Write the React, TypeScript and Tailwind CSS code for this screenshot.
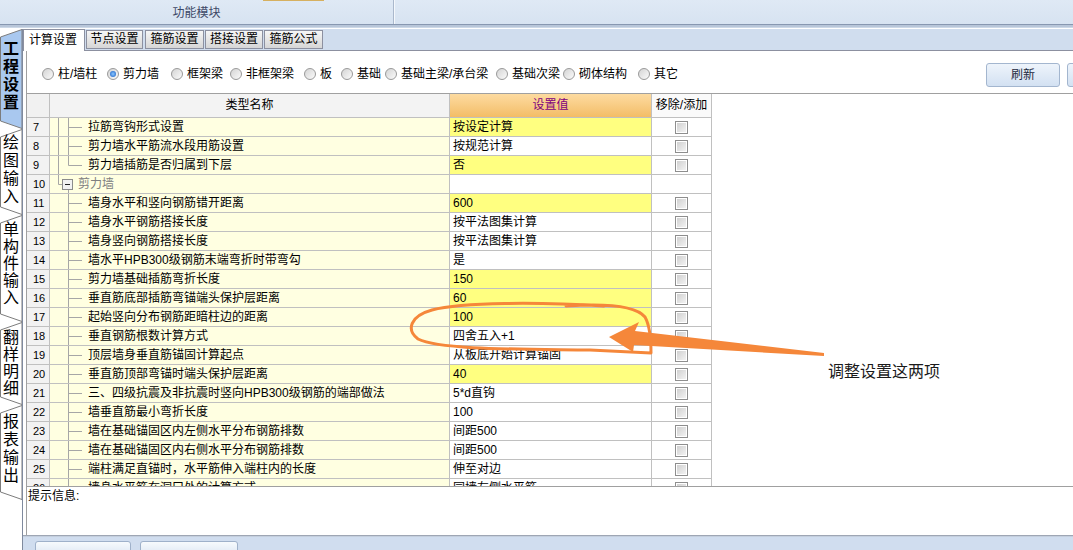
import React from 'react'

type Kind = 'mid2' | 'last2' | 'group' | 'child'

interface Row {
  n: number
  name: string
  value: string
  yellow?: boolean
  kind: Kind
}

const rows: Row[] = [
  { n: 7, name: '拉筋弯钩形式设置', value: '按设定计算', yellow: true, kind: 'mid2' },
  { n: 8, name: '剪力墙水平筋流水段用筋设置', value: '按规范计算', kind: 'mid2' },
  { n: 9, name: '剪力墙插筋是否归属到下层', value: '否', yellow: true, kind: 'last2' },
  { n: 10, name: '剪力墙', value: '', kind: 'group' },
  { n: 11, name: '墙身水平和竖向钢筋错开距离', value: '600', yellow: true, kind: 'child' },
  { n: 12, name: '墙身水平钢筋搭接长度', value: '按平法图集计算', kind: 'child' },
  { n: 13, name: '墙身竖向钢筋搭接长度', value: '按平法图集计算', kind: 'child' },
  { n: 14, name: '墙水平HPB300级钢筋末端弯折时带弯勾', value: '是', kind: 'child' },
  { n: 15, name: '剪力墙基础插筋弯折长度', value: '150', yellow: true, kind: 'child' },
  { n: 16, name: '垂直筋底部插筋弯锚端头保护层距离', value: '60', yellow: true, kind: 'child' },
  { n: 17, name: '起始竖向分布钢筋距暗柱边的距离', value: '100', yellow: true, kind: 'child' },
  { n: 18, name: '垂直钢筋根数计算方式', value: '四舍五入+1', kind: 'child' },
  { n: 19, name: '顶层墙身垂直筋锚固计算起点', value: '从板底开始计算锚固', kind: 'child' },
  { n: 20, name: '垂直筋顶部弯锚时端头保护层距离', value: '40', yellow: true, kind: 'child' },
  { n: 21, name: '三、四级抗震及非抗震时竖向HPB300级钢筋的端部做法', value: '5*d直钩', kind: 'child' },
  { n: 22, name: '墙垂直筋最小弯折长度', value: '100', kind: 'child' },
  { n: 23, name: '墙在基础锚固区内左侧水平分布钢筋排数', value: '间距500', kind: 'child' },
  { n: 24, name: '墙在基础锚固区内右侧水平分布钢筋排数', value: '间距500', kind: 'child' },
  { n: 25, name: '端柱满足直锚时，水平筋伸入端柱内的长度', value: '伸至对边', kind: 'child' },
  { n: 26, name: '墙身水平筋在洞口处的计算方式', value: '同墙左侧水平筋', kind: 'child' },
]

const radios = [
  { label: '柱/墙柱', w: 'w-[65px]' },
  { label: '剪力墙', w: 'w-[64px]', on: true },
  { label: '框架梁', w: 'w-[59px]' },
  { label: '非框架梁', w: 'w-[74px]' },
  { label: '板', w: 'w-[37px]' },
  { label: '基础', w: 'w-[44px]' },
  { label: '基础主梁/承台梁', w: 'w-[111px]' },
  { label: '基础次梁', w: 'w-[67px]' },
  { label: '砌体结构', w: 'w-[75px]' },
  { label: '其它', w: 'w-[40px]' },
]

function Tree({ kind }: { kind: Kind }) {
  const s = '#a6a6a6'
  if (kind === 'group') {
    return (
      <svg width="28" height="18" className="shrink-0">
        <line x1="8.5" y1="0" x2="8.5" y2="9.5" stroke={s} />
        <line x1="8.5" y1="9.5" x2="12" y2="9.5" stroke={s} />
        <line x1="18.5" y1="15" x2="18.5" y2="18" stroke={s} />
        <rect x="12.5" y="4.5" width="10" height="10" fill="#f2f2f2" stroke="#8c8c8c" />
        <line x1="15" y1="9.5" x2="20" y2="9.5" stroke="#222" />
      </svg>
    )
  }
  return (
    <svg width="38" height="18" className="shrink-0">
      {kind !== 'child' && <line x1="8.5" y1="0" x2="8.5" y2="18" stroke={s} />}
      <line x1="18.5" y1="0" x2="18.5" y2={kind === 'last2' ? 9.5 : 18} stroke={s} />
      <line x1="18.5" y1="9.5" x2="32" y2="9.5" stroke={s} />
    </svg>
  )
}

function Check() {
  return (
    <span className="block w-[13px] h-[13px] border border-[#8e8e8e] shadow-[inset_0_0_0_1px_#ffffff] bg-linear-to-br from-[#cdcdcd] to-[#f6f6f6]" />
  )
}

function SideTab({ label, h, box, active }: { label: string; h: number; box: string; active?: boolean }) {
  return (
    <div className={`relative shrink-0 w-[22px] ${box}`}>
      <svg className="absolute left-0 top-0" width="22" height={h}>
        <polygon
          points={`22,0.5 0.5,8 0.5,${h - 8} 22,${h - 0.5}`}
          fill={active ? '#a9c8ef' : '#ffffff'}
          stroke="#7c7c7c"
        />
      </svg>
      <div className={`relative flex flex-col items-center text-[16px] leading-[18px] ${active ? 'font-bold' : ''}`}>
        {label.split('').map((c, i) => (
          <span key={i}>{c}</span>
        ))}
      </div>
    </div>
  )
}

export default function App() {
  return (
    <div className="relative w-[1073px] h-[550px] overflow-hidden bg-white text-black font-['Liberation_Sans','Noto_Sans_CJK_SC',sans-serif]">
      {/* 顶部功能区 */}
      <div className="flex flex-col h-[29px]">
        <div className="flex h-[25px] bg-linear-to-b from-[#dfe9f5] to-[#d7e3f1] border-b border-[#8797b0]">
          <div className="w-[394px] flex flex-col border-r border-[#aab8cc]">
            <div className="ml-[263px] w-[61px] h-[1px] bg-[#d6b060]" />
            <div className="flex-1 flex items-center justify-center text-[12px] text-[#3c4866]">功能模块</div>
          </div>
          <div className="flex-1 border-l border-[#f4f8fc]" />
        </div>
        <div className="h-[2px] bg-[#b8c6d9]" />
        <div className="h-[1px] bg-[#ccd8e7]" />
        <div className="h-[1px] bg-white" />
      </div>

      <div className="flex h-[521px]">
        {/* 左侧竖向页签 */}
        <div className="w-[23px] shrink-0 flex flex-col border-r border-[#7f8a9e] bg-white">
          <SideTab label="工程设置" h={100} box="h-[100px] pt-[11px]" active />
          <SideTab label="绘图输入" h={86} box="h-[86px] pt-[5px]" />
          <SideTab label="单构件输入" h={107} box="h-[107px] pt-[6px] [&>div]:leading-[17px]" />
          <SideTab label="翻样明细" h={83} box="h-[83px] pt-[7px] [&>div]:leading-[17px]" />
          <SideTab label="报表输出" h={95} box="h-[95px] pt-[8px]" />
        </div>

        {/* 主区域 */}
        <div className="flex-1 flex flex-col min-w-0">
          {/* 页签条 */}
          <div className="h-[22px] flex items-end bg-[#d0ddee] border-b border-[#8c90a0] text-[12px]">
            <div className="w-[62px] h-[22px] -mb-[1px] bg-white border-l border-t border-r border-[#8c90a0] pl-[5px] leading-[20px]">
              计算设置
            </div>
            {[
              ['节点设置', 'ml-[1px] w-[57px]'],
              ['箍筋设置', 'ml-[2px] w-[59px]'],
              ['搭接设置', 'ml-[1px] w-[58px]'],
              ['箍筋公式', 'ml-[1px] w-[59px]'],
            ].map(([t, c]) => (
              <div
                key={t}
                className={`${c} h-[19px] mb-[1px] border border-[#8c90a0] bg-linear-to-b from-[#f6f6f6] to-[#d6d6d6] text-center leading-[17px]`}
              >
                {t}
              </div>
            ))}
          </div>

          <div className="pl-[3px] flex flex-col">
            <div className="border-l border-[#a0a0a0] flex flex-col">
              {/* 构件类型 */}
              <div className="h-[42px] flex items-start overflow-hidden text-[12px]">
                <div className="flex pl-[15px] mt-[15px] shrink-0">
                  {radios.map(r => (
                    <div key={r.label} className={`${r.w} shrink-0 flex items-center h-[16px]`}>
                      <span className="w-[12px] h-[12px] mr-[4px] rounded-full border border-[#999] bg-linear-to-br from-[#d4d4d4] to-[#fbfbfb] flex items-center justify-center">
                        {r.on && <span className="w-[6px] h-[6px] rounded-full bg-radial from-[#8cc8ff] to-[#0d58c2]" />}
                      </span>
                      <span className="leading-[16px] whitespace-nowrap">{r.label}</span>
                    </div>
                  ))}
                </div>
                <button className="ml-[308px] mt-[12px] shrink-0 w-[74px] h-[24px] rounded-[3px] border border-[#a3b6cf] bg-linear-to-b from-[#eef4fb] to-[#d3e1f2] text-[12px] text-[#1e2a40]">
                  刷新
                </button>
                <button className="ml-[7px] mt-[12px] shrink-0 w-[74px] h-[24px] rounded-[3px] border border-[#a3b6cf] bg-linear-to-b from-[#eef4fb] to-[#d3e1f2]" />
              </div>

              {/* 设置表格 */}
              <div className="h-[394px] border-t border-b border-[#a0a0a0] overflow-hidden">
                <div className="flex w-[685px] h-[24px] border-b border-[#c0c0c0] text-[12px] leading-[23px]">
                  <div className="w-[23px] border-r border-[#c0c0c0] bg-[#f1f1f1]" />
                  <div className="w-[400px] border-r border-[#c0c0c0] bg-[#f3f3f3] text-center">类型名称</div>
                  <div className="w-[202px] border-r border-[#c0c0c0] bg-linear-to-b from-[#fddba0] to-[#f3bd66] text-center text-[#80007f]">
                    设置值
                  </div>
                  <div className="w-[60px] border-r border-[#c0c0c0] bg-[#fafafa] text-center whitespace-nowrap">移除/添加</div>
                </div>
                {rows.map(r => (
                  <div key={r.n} className="flex w-[685px] h-[19px] border-b border-[#c0c0c0] text-[12px] leading-[18px]">
                    <div className="w-[23px] border-r border-[#c0c0c0] bg-[#f2f2f2] pl-[6px] text-[11px]">{r.n}</div>
                    <div className="w-[400px] border-r border-[#c0c0c0] bg-[#ffffe1] flex items-center whitespace-nowrap overflow-hidden">
                      <Tree kind={r.kind} />
                      <span className={r.kind === 'group' ? 'text-[#808080]' : ''}>{r.name}</span>
                    </div>
                    <div className={`w-[202px] border-r border-[#c0c0c0] pl-[3px] whitespace-nowrap ${r.yellow ? 'bg-[#ffff80]' : 'bg-white'}`}>
                      {r.value}
                    </div>
                    <div className="w-[60px] border-r border-[#c0c0c0] flex items-center justify-center">
                      {r.kind !== 'group' && <Check />}
                    </div>
                  </div>
                ))}
              </div>

              {/* 提示信息 */}
              <div className="h-[48px] pl-[1px] pt-[2px] text-[12px] leading-[14px]">提示信息:</div>
            </div>
          </div>
          <div className="h-[1px] bg-[#9ea6b4]" />
          <div className="h-[1px] bg-[#c4cfde]" />
          <div className="h-[13px] bg-[#d0ddef] flex items-start overflow-hidden">
            <div className="ml-[12px] mt-[4px] w-[96px] h-[14px] rounded-t-[3px] border border-[#9fb1ca] bg-linear-to-b from-[#f7fafd] to-[#dfe8f4]" />
            <div className="ml-[9px] mt-[4px] w-[98px] h-[14px] rounded-t-[3px] border border-[#9fb1ca] bg-linear-to-b from-[#f7fafd] to-[#dfe8f4]" />
          </div>
        </div>
      </div>

      {/* 标注 */}
      <svg className="absolute left-0 top-0 pointer-events-none" width="1073" height="550">
        <path
          d="M604 306 C540 302 462 302 432 310 C410 316 406 330 418 339 C440 350 520 349 590 350 L651 353 C651 338 650 326 645 317 C636 306 610 303 566 306"
          fill="none"
          stroke="#f5873a"
          strokeWidth="3"
          strokeLinecap="round"
          strokeLinejoin="round"
        />
        <polygon points="609,337 639,322 635,331 824,353 824,356 634,345 633,352" fill="#f5873a" />
      </svg>
      <div className="absolute left-[828px] top-[360px] text-[16px] leading-[20px] text-[#1a1a1a] font-['Noto_Sans_CJK_SC',sans-serif]">
        调整设置这两项
      </div>
    </div>
  )
}
